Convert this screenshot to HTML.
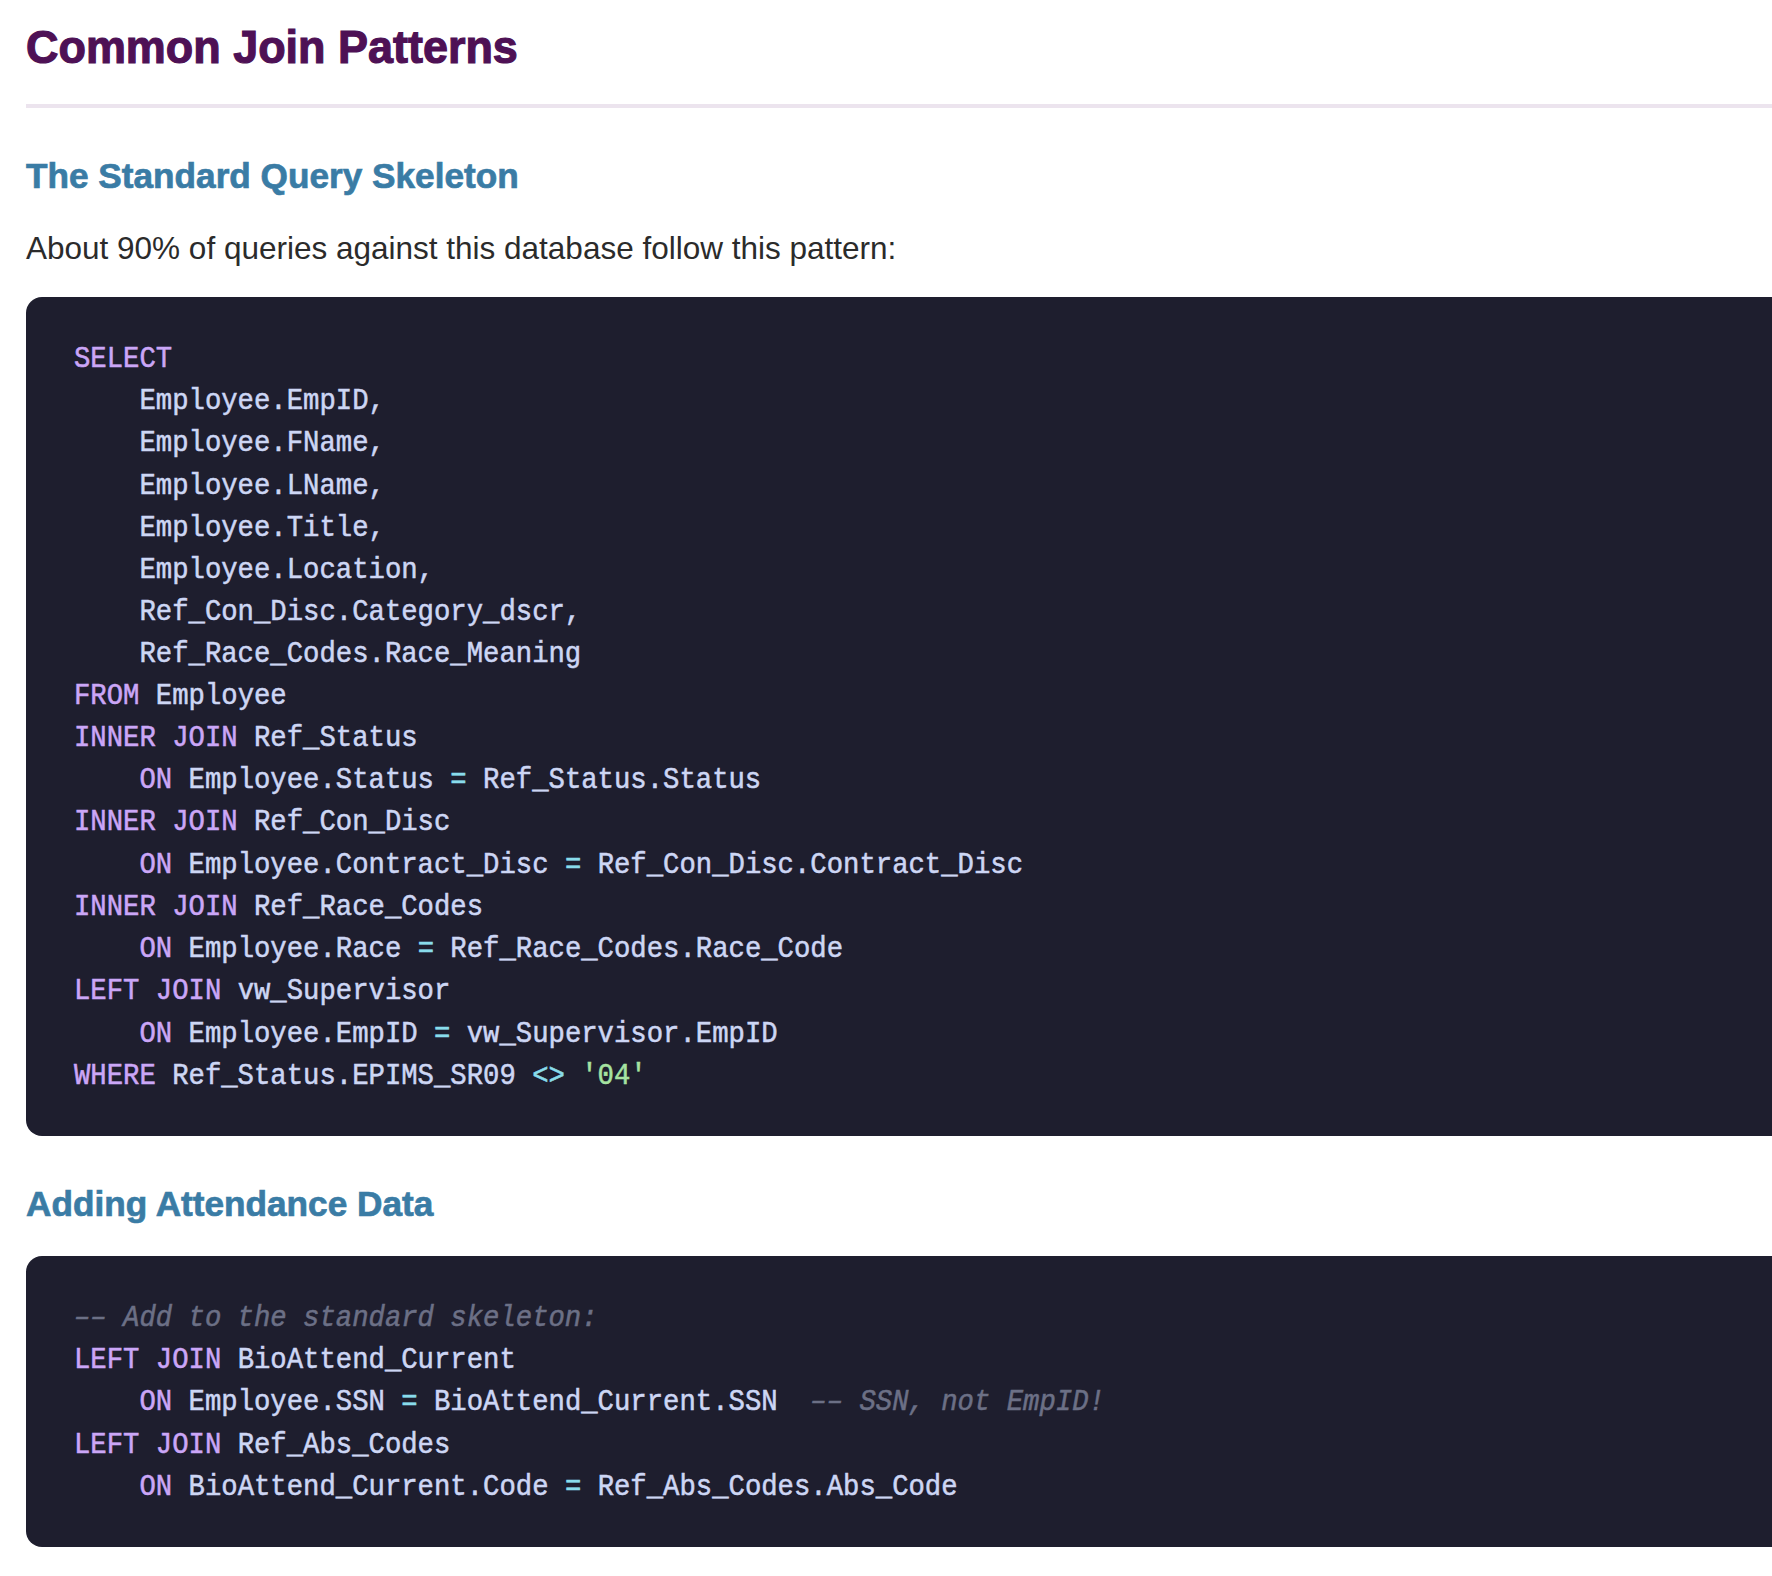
<!DOCTYPE html>
<html><head><meta charset="utf-8">
<style>
html,body{margin:0;padding:0;background:#fff;}
body{width:1772px;height:1576px;overflow:hidden;position:relative;font-family:"Liberation Sans",sans-serif;}
.a{position:absolute;white-space:pre;margin:0;}
#h1{-webkit-text-stroke:1.2px currentColor;left:26px;top:23.4px;transform:scaleX(0.956);transform-origin:0 0;font-size:47px;font-weight:bold;color:#4e1155;line-height:1;}
#hr{position:absolute;left:26px;top:104px;width:1746px;height:4px;background:#ece4ee;}
.h2{-webkit-text-stroke:0.7px currentColor;font-size:35.2px;font-weight:bold;color:#3a7ca5;line-height:1;left:26px;}
#p{left:26px;top:233px;font-size:31.5px;color:#2b2b2b;line-height:1;}
.blk{position:absolute;left:26px;width:1800px;background:#1e1e2e;border-radius:16px;}
pre{margin:0;position:absolute;left:48px;font-family:"Liberation Mono",monospace;font-size:27.28px;line-height:39.037px;color:#cdd6f4;transform:scaleY(1.08);transform-origin:0 0;-webkit-text-stroke:0.5px currentColor;}
.k{color:#cba6f7}.o{color:#89dceb}.s{color:#a6e3a1}.c{color:#6c7086;font-style:italic}
</style></head><body>
<div class="a" id="h1">Common Join Patterns</div>
<div id="hr"></div>
<div class="a h2" id="h2a" style="top:158px;transform:scaleX(1);transform-origin:0 0">The Standard Query Skeleton</div>
<div class="a" id="p">About 90% of queries against this database follow this pattern:</div>
<div class="blk" id="b1" style="top:297px;height:839px;">
<pre id="pre1" style="top:40.8px;"><span class="k">SELECT</span>
    Employee.EmpID,
    Employee.FName,
    Employee.LName,
    Employee.Title,
    Employee.Location,
    Ref_Con_Disc.Category_dscr,
    Ref_Race_Codes.Race_Meaning
<span class="k">FROM</span> Employee
<span class="k">INNER JOIN</span> Ref_Status
    <span class="k">ON</span> Employee.Status <span class="o">=</span> Ref_Status.Status
<span class="k">INNER JOIN</span> Ref_Con_Disc
    <span class="k">ON</span> Employee.Contract_Disc <span class="o">=</span> Ref_Con_Disc.Contract_Disc
<span class="k">INNER JOIN</span> Ref_Race_Codes
    <span class="k">ON</span> Employee.Race <span class="o">=</span> Ref_Race_Codes.Race_Code
<span class="k">LEFT JOIN</span> vw_Supervisor
    <span class="k">ON</span> Employee.EmpID <span class="o">=</span> vw_Supervisor.EmpID
<span class="k">WHERE</span> Ref_Status.EPIMS_SR09 <span class="o">&lt;&gt;</span> <span class="s">'04'</span></pre>
</div>
<div class="a h2" id="h2b" style="top:1186px;transform:scaleX(1);transform-origin:0 0">Adding Attendance Data</div>
<div class="blk" id="b2" style="top:1256px;height:291px;">
<pre id="pre2" style="top:40.8px;"><span class="c">–– Add to the standard skeleton:</span>
<span class="k">LEFT JOIN</span> BioAttend_Current
    <span class="k">ON</span> Employee.SSN <span class="o">=</span> BioAttend_Current.SSN  <span class="c">–– SSN, not EmpID!</span>
<span class="k">LEFT JOIN</span> Ref_Abs_Codes
    <span class="k">ON</span> BioAttend_Current.Code <span class="o">=</span> Ref_Abs_Codes.Abs_Code</pre>
</div>
</body></html>
